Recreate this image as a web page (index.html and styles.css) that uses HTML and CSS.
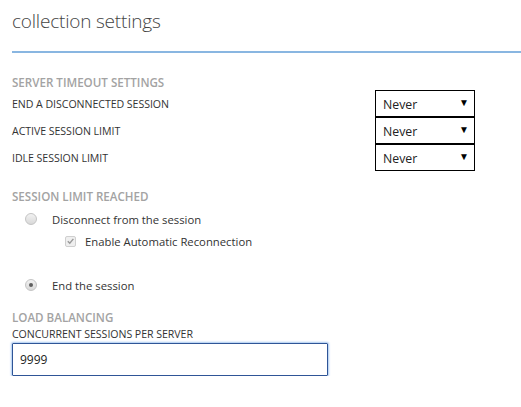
FILE: index.html
```html
<!DOCTYPE html>
<html>
<head>
<meta charset="utf-8">
<link rel="stylesheet" href="styles.css">
</head>
<body>
<div class="page">
  <h1 class="title">collection settings</h1>
  <div class="rule"></div>

  <div class="section-head first">SERVER TIMEOUT SETTINGS</div>
  <div class="timeout-grid">
    <div class="row">
      <span class="label">END A DISCONNECTED SESSION</span>
      <div class="select"><span>Never</span><span class="arrow">▼</span></div>
    </div>
    <div class="row">
      <span class="label">ACTIVE SESSION LIMIT</span>
      <div class="select"><span>Never</span><span class="arrow">▼</span></div>
    </div>
    <div class="row">
      <span class="label">IDLE SESSION LIMIT</span>
      <div class="select"><span>Never</span><span class="arrow">▼</span></div>
    </div>
  </div>

  <div class="section-head limit">SESSION LIMIT REACHED</div>
  <div class="option">
    <span class="radio"></span>
    <span class="opt-text">Disconnect from the session</span>
  </div>
  <div class="option sub">
    <span class="checkbox">
      <svg width="10" height="10" viewBox="0 0 10 10"><path d="M2 5.2 L4.2 7.4 L8.2 2.6" fill="none" stroke="#9a9a9a" stroke-width="1.6"/></svg>
    </span>
    <span class="opt-text">Enable Automatic Reconnection</span>
  </div>
  <div class="option end">
    <span class="radio checked"></span>
    <span class="opt-text">End the session</span>
  </div>

  <div class="section-head lb">LOAD BALANCING</div>
  <div class="label small">CONCURRENT SESSIONS PER SERVER</div>
  <div class="input">9999</div>
</div>
</body>
</html>
```
FILE: styles.css
```css
html, body {
  margin: 0;
  padding: 0;
  background: #fff;
}
body {
  font-family: "Open Sans", "Noto Sans", sans-serif;
  color: #333;
}
.page {
  padding: 0 0 0 12px;
}
.title {
  margin: 0;
  padding-top: 8px;
  font-weight: 300;
  font-size: 19px;
  line-height: 26px;
  color: #444;
  letter-spacing: -0.2px;
}
.rule {
  margin-top: 17px;
  height: 2px;
  background: #89b6e1;
}
.section-head {
  font-size: 11.6px;
  font-weight: 600;
  color: #a3a3a3;
  line-height: 14px;
}
.section-head.first {
  margin-top: 23px;
}
.timeout-grid {
  display: flex;
  flex-direction: column;
  margin-top: 0;
}
.row {
  display: flex;
  justify-content: space-between;
  align-items: center;
  width: 463px;
}
.label {
  font-size: 10.6px;
  color: #333;
  letter-spacing: -0.05px;
}
.select {
  box-sizing: border-box;
  width: 100px;
  height: 27px;
  border: 1px solid #000;
  display: flex;
  align-items: center;
  justify-content: space-between;
  padding: 1px 5px 0 7px;
  font-size: 12.3px;
  color: #222;
}
.arrow {
  font-size: 10px;
  color: #000;
  margin-top: -4px;
}
.section-head.limit {
  margin-top: 19px;
}
.option {
  display: flex;
  align-items: center;
  font-size: 11.3px;
  color: #333;
  margin-left: 13px;
  margin-top: 7px;
  height: 16px;
}
.option.sub {
  margin-left: 53px;
  margin-top: 6px;
}
.option.end {
  margin-top: 28px;
}
.radio {
  box-sizing: border-box;
  width: 12px;
  height: 12px;
  border-radius: 50%;
  border: 1px solid #c4c4c4;
  background: linear-gradient(#f2f2f2, #d9d9d9);
  margin-right: 15px;
  position: relative;
  flex: none;
}
.radio.checked::after {
  content: "";
  position: absolute;
  left: 3px;
  top: 3px;
  width: 4px;
  height: 4px;
  border-radius: 50%;
  background: #5f5f5f;
}
.checkbox {
  box-sizing: border-box;
  width: 11px;
  height: 11px;
  border: 1px solid #cfcfcf;
  border-radius: 2px;
  background: #efefef;
  margin-right: 9px;
  display: flex;
  align-items: center;
  justify-content: center;
  flex: none;
}
.section-head.lb {
  margin-top: 18px;
}
.label.small {
  display: block;
  margin-top: 2px;
  line-height: 14px;
}
.input {
  box-sizing: border-box;
  margin-top: 2px;
  width: 316px;
  height: 33px;
  border: 1px solid #2f5597;
  box-shadow: 0 0 2px 1px #a9c9f0;
  border-radius: 1px;
  padding: 7px 7px;
  font-size: 12px;
  color: #222;
}
```
